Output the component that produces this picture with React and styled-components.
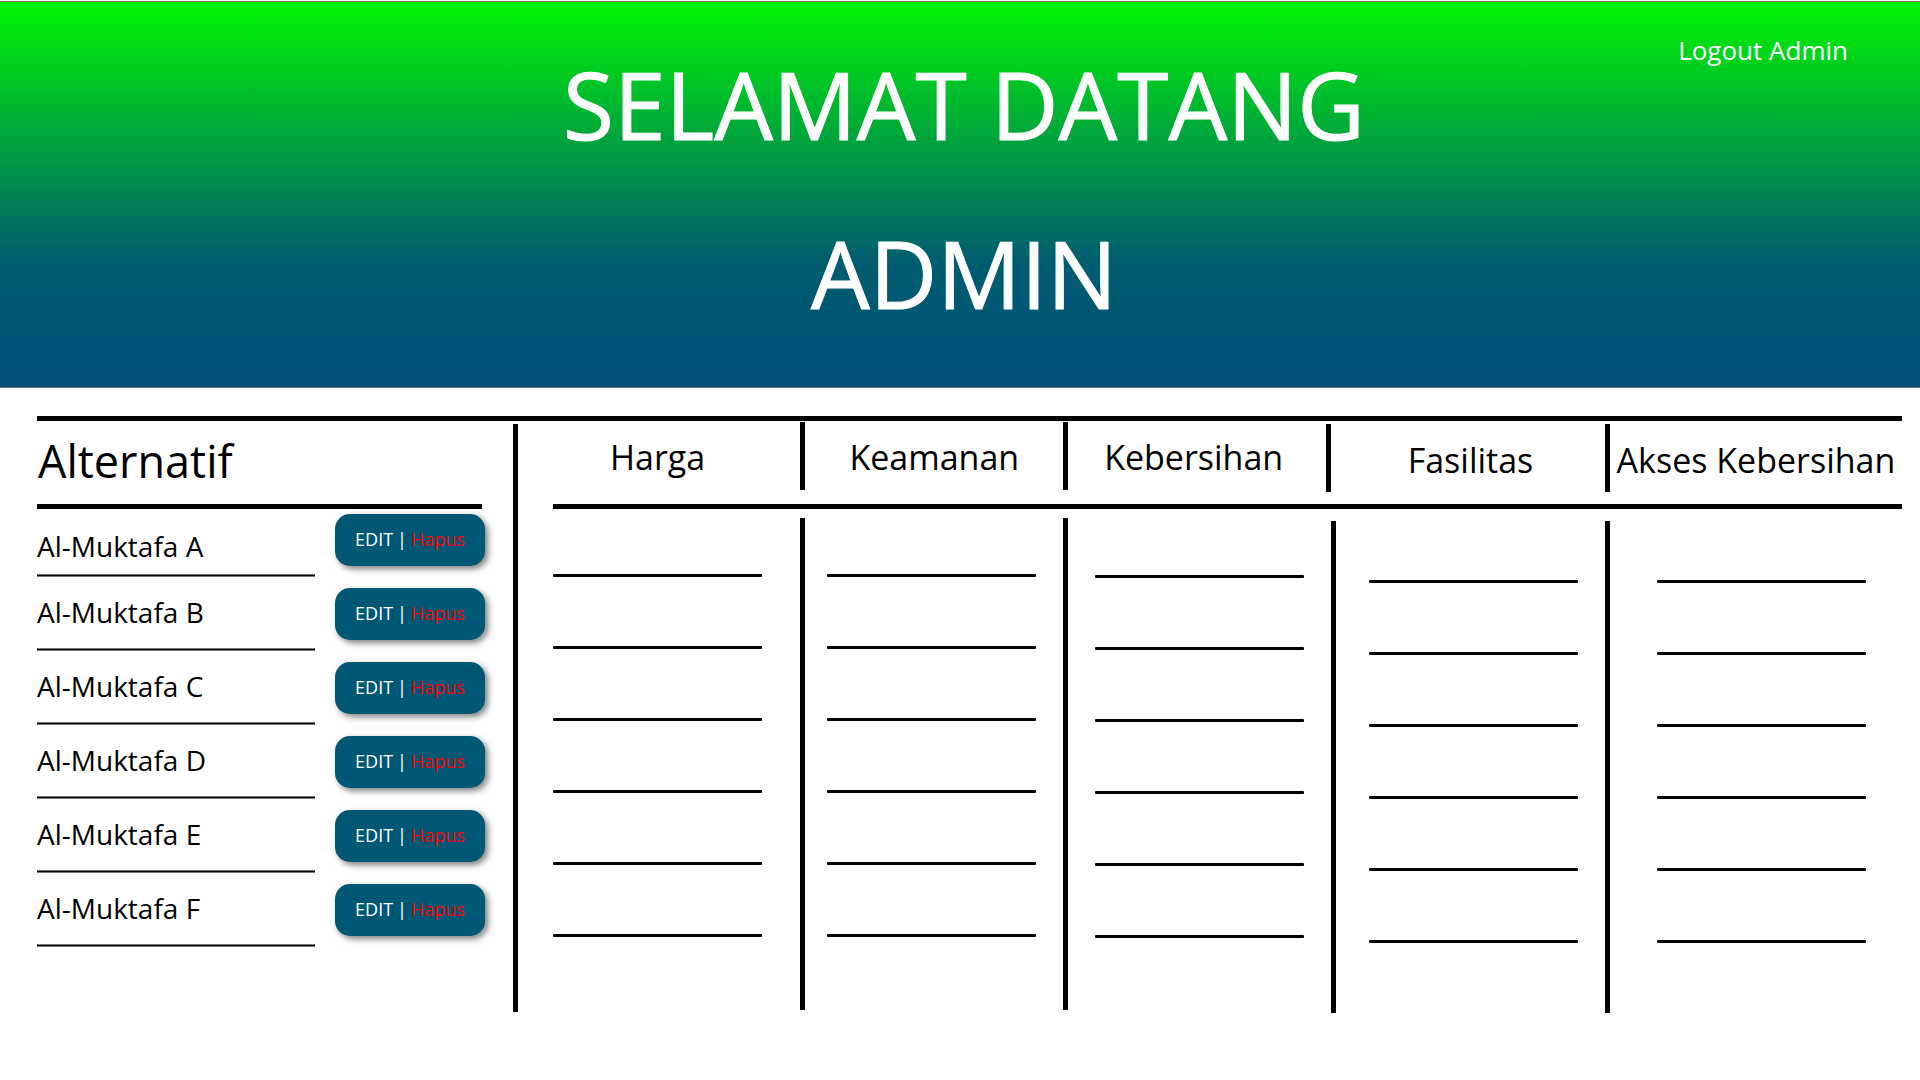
import React from "react";
import styled, { createGlobalStyle } from "styled-components";

const GlobalStyle = createGlobalStyle`
  *, *::before, *::after { box-sizing: border-box; }
  body {
    margin: 0;
    background: #fff;
    color: #000;
    font-family: "Open Sans", "Noto Sans", sans-serif;
  }
`;

const Page = styled.div`
  min-height: 100vh;
  padding-top: 1px;
`;

const Banner = styled.header`
  display: flex;
  flex-direction: column;
  height: 387px;
  padding: 18px 72px 0 80px;
  border: solid #707070;
  border-width: 1px 0;
  background: linear-gradient(#00f405 0%, #005d6e 67%, #004f7a 100%);
  color: #fff;
`;

const LogoutLink = styled.a`
  align-self: flex-end;
  height: 0;
  color: inherit;
  font-size: 26px;
  line-height: 60px;
  text-decoration: none;
`;

const Title = styled.h1`
  margin: 0;
  font-size: 93px;
  font-weight: 400;
  line-height: 169px;
  text-align: center;
  -webkit-text-stroke: 1px #fff;

  span { display: block; }
`;

const Board = styled.main`
  display: grid;
  grid-template-columns: minmax(0, 448fr) auto minmax(0, 1349fr);
  align-items: start;
  margin: 28px 18px 0 37px;
  border-top: 5px solid #000;
`;

const Divider = styled.div`
  width: 5px;
  height: 588px;
  margin: 3px 35px 0 28px;
  background: #000;
`;

const Table = styled.table`
  width: 100%;
  table-layout: fixed;
  border-spacing: 0;

  th, td { padding: 0; vertical-align: top; }
`;

const Col = styled.col`
  width: ${(p) => p.$width};
`;

const NameHeading = styled.th`
  height: 88px;
  background: linear-gradient(#000, #000) left bottom / calc(100% - 3px) 5px no-repeat;
  font-size: 45px;
  font-weight: 400;
  line-height: 80px;
  text-align: left;
  text-indent: 1px;
`;

const NameRow = styled.tr`
  height: 74px;

  &:first-child td > div { padding-top: 8px; }
`;

const Name = styled.div`
  height: 67px;
  border-bottom: 1px solid #000;
  box-shadow: 0 1px #777, inset 0 -1px #777;
  font-size: 28px;
  line-height: 58px;
  white-space: nowrap;
`;

const Actions = styled.span`
  display: flex;
  align-items: center;
  justify-content: center;
  gap: 4px;
  width: 150px;
  height: 52px;
  margin: 5px 0 0 auto;
  padding-bottom: 2px;
  border-radius: 15px;
  background: #005874;
  box-shadow: 3px 3px 6px rgba(0, 0, 0, 0.5);
  color: #fff;
  font-size: 18px;
`;

const Action = styled.button`
  padding: 0;
  border: 0;
  background: none;
  color: ${(p) => (p.$danger ? "#f00" : "#fff")};
  font: inherit;
  cursor: pointer;
`;

const bar = "linear-gradient(#000, #000)";

const Criterion = styled.th`
  height: 88px;
  border-bottom: 5px solid #000;
  background: ${(p) => (p.$last ? "none" : `${bar} right ${p.$inset}px top ${p.$top}px / 5px 68px no-repeat`)};

  span {
    display: block;
    padding-top: ${(p) => p.$textTop}px;
    padding-right: ${(p) => p.$trail}px;
    font-size: 34px;
    font-weight: 400;
    line-height: 72px;
    text-align: center;
    white-space: nowrap;
  }
`;

const ValueRow = styled.tr`
  height: 72px;

  &:first-child { height: 81px; }
  &:last-child { height: 135px; }
`;

const Value = styled.td`
  background: ${(p) => (p.$last ? "none" : `${bar} right top / 5px 100% no-repeat`)};

  &::before {
    content: "";
    display: block;
    width: 209px;
    max-width: calc(100% - 5px);
    height: 3px;
    margin: ${(p) => 56 + p.$drop}px 0 0 ${(p) => p.$indent}px;
    border-radius: 1px;
    background: #000;
  }

  ${ValueRow}:first-child &::before { margin-top: ${(p) => 65 + p.$drop}px; }
  ${ValueRow}:first-child & {
    background-size: 5px calc(100% - ${(p) => (p.$low ? 12 : 9)}px);
    background-position: right bottom;
  }
  ${ValueRow}:last-child & {
    background-size: 5px calc(100% - ${(p) => (p.$low ? 0 : 3)}px);
  }
`;

const criteria = [
  { label: "Harga", width: "18.7%", indent: 0, drop: 0, top: 1, textTop: 0, inset: 0, trail: 43 },
  { label: "Keamanan", width: "19.5%", indent: 22, drop: 0, top: 1, textTop: 0, inset: 0, trail: 5 },
  { label: "Kebersihan", width: "19.85%", indent: 27, drop: 1, top: 3, textTop: 0, inset: 5, low: true, trail: 17 },
  { label: "Fasilitas", width: "20.3%", indent: 33, drop: 6, top: 3, textTop: 3, inset: 0, low: true, trail: 5 },
  { label: "Akses Kebersihan", width: "21.65%", indent: 47, drop: 6, top: 3, textTop: 3, inset: 0, trail: 0 },
];

const alternatives = ["A", "B", "C", "D", "E", "F"].map((x) => `Al-Muktafa ${x}`);

export default function App() {
  return (
    <>
      <GlobalStyle />
      <Page>
        <Banner>
          <LogoutLink href="#logout">Logout Admin</LogoutLink>
          <Title>
            <span>SELAMAT DATANG</span>
            <span>ADMIN</span>
          </Title>
        </Banner>
        <Board>
          <Table>
            <colgroup>
              <Col $width="62%" />
              <Col $width="38%" />
            </colgroup>
            <thead>
              <tr>
                <NameHeading colSpan={2}>Alternatif</NameHeading>
              </tr>
            </thead>
            <tbody>
              {alternatives.map((name) => (
                <NameRow key={name}>
                  <td>
                    <Name>{name}</Name>
                  </td>
                  <td>
                    <Actions>
                      <Action type="button">EDIT</Action>|
                      <Action type="button" $danger>Hapus</Action>
                    </Actions>
                  </td>
                </NameRow>
              ))}
            </tbody>
          </Table>
          <Divider />
          <Table>
            <colgroup>
              {criteria.map((c) => (
                <Col key={c.label} $width={c.width} />
              ))}
            </colgroup>
            <thead>
              <tr>
                {criteria.map((c, i) => (
                  <Criterion
                    key={c.label}
                    $top={c.top}
                    $textTop={c.textTop}
                    $inset={c.inset}
                    $trail={c.trail}
                    $last={i === criteria.length - 1}
                  >
                    <span>{c.label}</span>
                  </Criterion>
                ))}
              </tr>
            </thead>
            <tbody>
              {alternatives.map((name) => (
                <ValueRow key={name}>
                  {criteria.map((c, i) => (
                    <Value
                      key={c.label}
                      $indent={c.indent}
                      $drop={c.drop}
                      $low={c.low}
                      $last={i === criteria.length - 1}
                    />
                  ))}
                </ValueRow>
              ))}
            </tbody>
          </Table>
        </Board>
      </Page>
    </>
  );
}
